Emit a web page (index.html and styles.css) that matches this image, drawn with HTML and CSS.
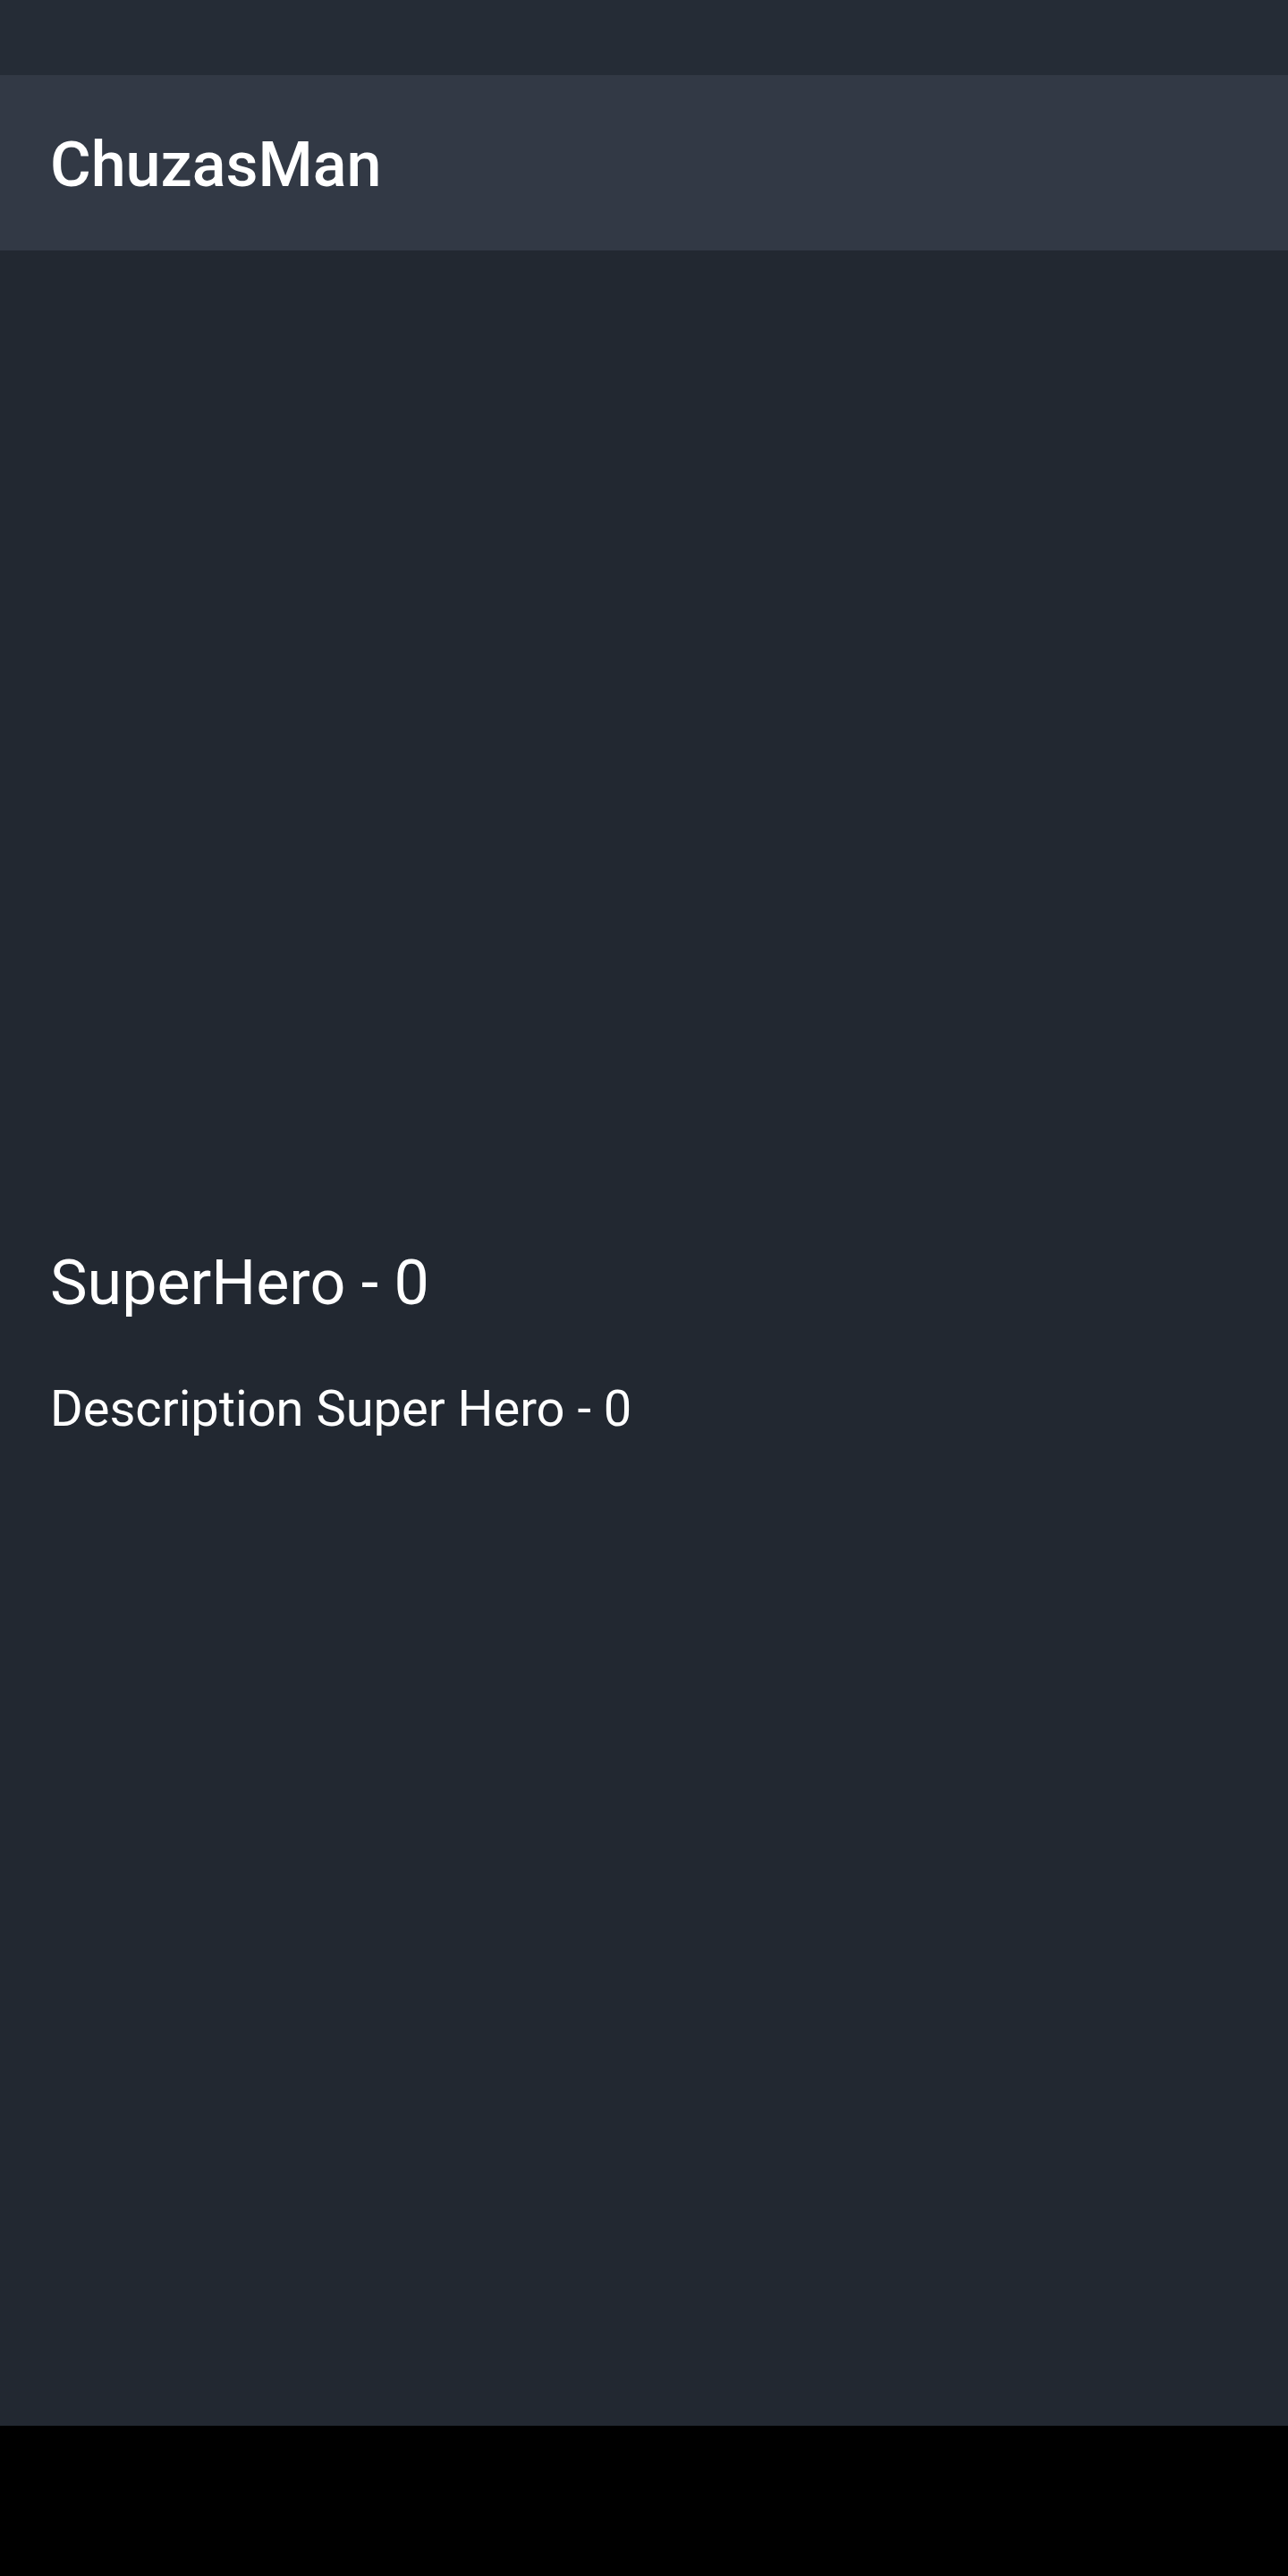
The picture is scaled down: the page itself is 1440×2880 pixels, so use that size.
FILE: index.html
```html
<!DOCTYPE html>
<html lang="en">
<head>
<meta charset="utf-8">
<title>ChuzasMan</title>
<link rel="stylesheet" href="styles.css">
</head>
<body>
<div class="screen">
  <div class="status-bar"></div>
  <header class="toolbar">
    <h1 class="toolbar-title">ChuzasMan</h1>
  </header>
  <main class="content">
    <div class="hero">
      <h2 class="hero-name">SuperHero - 0</h2>
      <p class="hero-desc">Description Super Hero - 0</p>
    </div>
  </main>
  <div class="nav-bar"></div>
</div>
</body>
</html>
```
FILE: styles.css
```css
html, body {
  margin: 0;
  padding: 0;
  background: #000000;
}
body {
  font-family: Roboto, "Noto Sans", "Liberation Sans", sans-serif;
  color: #ffffff;
}
.screen {
  width: 1440px;
  height: 2880px;
  display: flex;
  flex-direction: column;
}
.status-bar {
  height: 84px;
  background: #252c36;
  flex: none;
}
.toolbar {
  height: 196px;
  background: #323945;
  flex: none;
  box-sizing: border-box;
  padding: 59px 56px 0;
}
.toolbar-title {
  margin: 0;
  font-size: 70px;
  line-height: 82px;
  font-weight: 500;
}
.content {
  height: 2432px;
  flex: none;
  box-sizing: border-box;
  background: #222831;
  padding: 9px 56px 0;
  display: flex;
  flex-direction: column;
  justify-content: center;
}
.hero-name {
  margin: 0;
  font-size: 70px;
  line-height: 82px;
  font-weight: 400;
}
.hero-desc {
  margin: 67px 0 0;
  font-size: 56px;
  line-height: 66px;
  font-weight: 400;
}
.nav-bar {
  flex: 1;
  background: #000000;
}
```
